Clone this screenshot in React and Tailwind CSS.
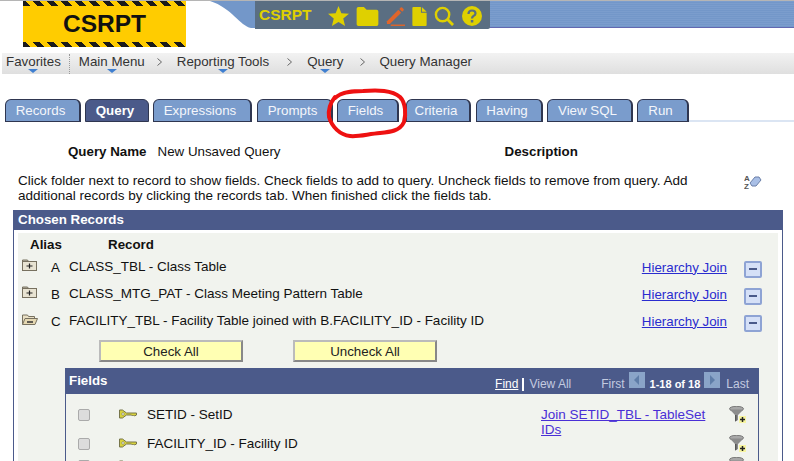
import React from 'react';

const tabs = [
  { label: 'Records', w: 'w-[76px] mr-[4px]' },
  { label: 'Query', w: 'w-[64px] mr-[4px]', active: true },
  { label: 'Expressions', w: 'w-[99px] mr-[5px]' },
  { label: 'Prompts', w: 'w-[76px] mr-[4px]' },
  { label: 'Fields', w: 'w-[62px] mr-[7px]' },
  { label: 'Criteria', w: 'w-[65px] mr-[5px]' },
  { label: 'Having', w: 'w-[67px] mr-[4px]' },
  { label: 'View SQL', w: 'w-[86px] mr-[4px]' },
  { label: 'Run', w: 'w-[52px]' },
];

const records = [
  { alias: 'A', name: 'CLASS_TBL - Class Table', open: false },
  { alias: 'B', name: 'CLASS_MTG_PAT - Class Meeting Pattern Table', open: false },
  { alias: 'C', name: 'FACILITY_TBL - Facility Table joined with B.FACILITY_ID - Facility ID', open: true },
];

const fields = [
  { name: 'SETID - SetID', join: 'Join SETID_TBL - TableSet IDs', h: 'h-[29px]' },
  { name: 'FACILITY_ID - Facility ID', h: 'h-[22px]' },
  { name: 'EFFDT - Effective Date', h: 'h-[30px]' },
];

const Star = () => (
  <svg width="21" height="20" viewBox="0 0 22 21"><path d="M11 0l3 7.500 8 .6-6 5 1.900 7.900L11 16.800 4.100 21 6 13.100l-6-5 8-.6z" fill="#dfd000" /></svg>
);

const Folder = () => (
  <svg width="23" height="19" viewBox="0 0 24 21"><path d="M0 2q0-2 2-2h6l3 3h11q2 0 2 2v14q0 2-2 2H2q-2 0-2-2z" fill="#dfd000" /></svg>
);

const Pencil = () => (
  <svg width="19" height="19" viewBox="0 0 20 20"><path d="M1 15L13 3l3 3L4 18H1z" fill="#e0652a" /><path d="M14 2l1.500-1.500q.8-.5 1.500 0l1.500 1.500q.5.700 0 1.500L17 5z" fill="#e0652a" /><path d="M5 19.200h15" stroke="#e0652a" strokeWidth="1.500" /></svg>
);

const Page = () => (
  <svg width="15" height="19" viewBox="0 0 15 20"><path d="M1 0h8v6h6v13q0 1-1 1H1q-1 0-1-1V1q0-1 1-1z" fill="#dfd000" /><path d="M10 0l5 5h-5z" fill="#dfd000" /></svg>
);

const Search = () => (
  <svg width="20" height="20" viewBox="0 0 21 21" fill="none" stroke="#dfd000"><circle cx="9" cy="9" r="7" strokeWidth="2.500" /><path d="M14 14l6 6" strokeWidth="3" /></svg>
);

const Help = () => (
  <svg width="20" height="20" viewBox="0 0 20 20"><circle cx="10" cy="10" r="10" fill="#dfd000" /><path d="M6.500 8q0-3.500 3.500-3.500T13.500 7.500q0 1.500-2 2.500-1.500.8-1.500 2.500" fill="none" stroke="#5a6e82" strokeWidth="2.200" /><rect x="8.800" y="14" width="2.500" height="2.500" fill="#5a6e82" /></svg>
);

const FolderIcon = ({ open }) => (
  <svg width="16" height="13" viewBox="0 0 16 13" className="shrink-0">
    {open ? (
      <>
        <path d="M.5 11.500V2h5l1 1.500h6V5" fill="#e8dfc4" stroke="#77705f" />
        <path d="M.5 11.500L3 5.500h12.500l-2.500 6z" fill="#e5d8b2" stroke="#77705f" />
        <path d="M5 9h6" stroke="#333" strokeWidth="1.500" />
      </>
    ) : (
      <>
        <path d="M.5 2.500V1h5l1 1.500z" fill="#bdb8a8" stroke="#77705f" />
        <rect x=".5" y="2.500" width="14" height="9" fill="#e8e3d2" stroke="#77705f" />
        <path d="M4.500 7h6M7.500 4.500v5" stroke="#222" strokeWidth="1.200" />
      </>
    )}
  </svg>
);

const MinusButton = () => (
  <span className="flex h-[17px] w-[18px] items-center justify-center rounded-[2px] border-2 border-[#8ea3d4] bg-[#d5e0f7]">
    <span className="h-[2px] w-[8px] bg-[#4a5a8a]" />
  </span>
);

const KeyIcon = () => (
  <svg width="18" height="10" viewBox="0 0 18 10" className="shrink-0">
    <path d="M.5 1h3l4 3h10v2l-2 1-1-1-1 1-1-1H7.500l-4 3h-3z" fill="#d8d23c" stroke="#77754a" />
    <circle cx="4" cy="5" r="1.300" fill="#f2f4ef" stroke="#77754a" strokeWidth=".6" />
  </svg>
);

const FunnelIcon = () => (
  <svg width="17" height="17" viewBox="0 0 17 17" className="shrink-0">
    <ellipse cx="7.500" cy="2.800" rx="7" ry="2.500" fill="#a8a8a8" stroke="#777" />
    <path d="M.8 3.500L6 9v6.500l3-1.500V9l5.500-5.500z" fill="#8c8c8c" />
    <path d="M6 9v6.500l1.500-.8V9z" fill="#555" />
    <rect x="10" y="10" width="7" height="7" fill="#f7f5a0" />
    <path d="M11 13.500h5M13.500 11v5" stroke="#222" strokeWidth="1.500" />
  </svg>
);

const Caret = () => (
  <span className="absolute bottom-[1px] left-1/2 h-0 w-0 -translate-x-1/2 border-x-[5px] border-t-[4px] border-x-transparent border-t-[#3f7fd0]" />
);

const Crumb = ({ children, className, caret }) => (
  <span className={`relative flex h-full items-center pb-[4px] ${className}`}>
    {children}
    {caret && <Caret />}
  </span>
);

const Chevron = ({ className }) => (
  <svg width="5" height="8" viewBox="0 0 5 8" fill="none" stroke="#666" className={`mb-[3px] ${className}`}><path d="M.5.500L4.500 4 .5 7.500" /></svg>
);

export default function App() {
  return (
    <div className="relative h-[461px] w-[794px] overflow-hidden bg-white font-['Liberation_Sans',Arial,sans-serif] text-[13.33px] text-[#111]">
      {/* top banner */}
      <div className="h-[1px] bg-[#b5b5b5]" />
      <div className="flex h-[52px] items-start">
        <div className="ml-[23px] flex h-[46px] w-[163px] shrink-0 flex-col justify-between bg-[#ffcc00]">
          <div className="h-[5px] bg-[repeating-linear-gradient(45deg,#1a1a1a_0,#1a1a1a_5px,#ffcc00_5px,#ffcc00_10px)]" />
          <div className="text-center text-[24.5px] font-bold leading-none text-[#111]">CSRPT</div>
          <div className="h-[5px] bg-[repeating-linear-gradient(45deg,#1a1a1a_0,#1a1a1a_5px,#ffcc00_5px,#ffcc00_10px)]" />
        </div>
        <div className="relative ml-[24px] h-[28px] flex-1">
          <svg width="45" height="27" viewBox="0 0 45 27" className="absolute left-0 top-0">
            <path d="M0 0h45v27H41C30 25 22 7 0 0z" fill="#7397c9" />
          </svg>
          <div className="ml-[45px] h-[27px] bg-[#7397c9] bg-[repeating-linear-gradient(0deg,#7397c9_0,#7397c9_1px,#7b9dcd_1px,#7b9dcd_2px)] [border-bottom:1px_solid_#6268b0]">
            <div className="flex h-[28px] w-[235px] items-center rounded-br-[2px] bg-[#5a6e82] pl-[4px]">
              <span className="text-[15.5px] font-bold text-[#dfd000]">CSRPT</span>
              <span className="ml-[16px] mt-[2px] flex items-center gap-[7px]">
                <Star />
                <Folder />
                <Pencil />
                <Page />
                <Search />
                <span className="ml-[1px]"><Help /></span>
              </span>
            </div>
          </div>
        </div>
      </div>

      {/* breadcrumb bar */}
      <div className="ml-[2px] flex h-[21px] items-center bg-gradient-to-b from-[#f2f2f2] to-[#dfdfdf] pl-[4px] text-[#333]">
        <Crumb caret>Favorites</Crumb>
        <span className="ml-[8px] h-[20px] border-l border-dotted border-[#999]" />
        <Crumb caret className="ml-[9px]">Main Menu</Crumb>
        <Chevron className="ml-[12px]" />
        <Crumb caret className="ml-[15px]">Reporting Tools</Crumb>
        <Chevron className="ml-[18px]" />
        <Crumb caret className="ml-[15px]">Query</Crumb>
        <Chevron className="ml-[17px]" />
        <Crumb className="ml-[14px]">Query Manager</Crumb>
      </div>

      {/* tabs */}
      <div className="mt-[25px] flex h-[23px] items-stretch pl-[5px]">
        {tabs.map((tab) => (
          <div
            key={tab.label}
            className={`flex ${tab.w} items-center justify-center rounded-t-[6px] border border-[#2f3650] pr-[4px] pt-[1px] ${tab.active ? 'bg-[#4b5a8a] font-bold text-white' : 'border-r-2 bg-[#7a9ccc] text-[#f4f6fb]'}`}
          >
            {tab.label}
          </div>
        ))}
        <div className="mt-auto h-[2px] flex-1 bg-[#dbe5f3]" />
      </div>

      {/* query name row */}
      <div className="mt-[21px] flex h-[17px] items-center">
        <span className="ml-[68px] font-bold">Query Name</span>
        <span className="ml-[11px] w-[347px]">New Unsaved Query</span>
        <span className="font-bold">Description</span>
      </div>

      {/* instructions */}
      <div className="mt-[13px] flex">
        <p className="ml-[18px] w-[690px] text-[13.5px] leading-[15px]">
          Click folder next to record to show fields. Check fields to add to query. Uncheck fields to remove from query. Add additional records by clicking the records tab. When finished click the fields tab.
        </p>
        <svg width="18" height="16" viewBox="0 0 18 16" className="ml-[36px] mt-[1px]">
          <text x="0" y="7" fontSize="8" fontWeight="bold" fill="#555">A</text>
          <text x="0" y="15" fontSize="8" fontWeight="bold" fill="#555">Z</text>
          <path d="M6 9l5-6h4l2 3-5 6H8z" fill="#a9bfe6" stroke="#6a7fa8" />
        </svg>
      </div>

      {/* chosen records */}
      <div className="ml-[13px] mr-[11px] mt-[7px] h-[300px] border-x border-[#4b5a8a]">
        <div className="flex h-[20px] items-center bg-[#4b5a8a] pl-[4px] font-bold text-white">Chosen Records</div>
        <div className="mx-[4px] mt-[3px] h-full bg-[#f1f3ee]">
          <div className="flex h-[21px] items-center pt-[2px] font-bold">
            <span className="ml-[12px] w-[78px]">Alias</span>
            <span>Record</span>
          </div>
          {records.map((r) => (
            <div key={r.alias} className="flex h-[27px] items-center">
              <span className="mb-[4px] ml-[4px]"><FolderIcon open={r.open} /></span>
              <span className="ml-[13px] w-[18px]">{r.alias}</span>
              <span className="flex-1 text-[13.5px]">{r.name}</span>
              <a href="#" className="text-[#2a2ccf] underline">Hierarchy Join</a>
              <span className="ml-[17px] mr-[16px] mt-[3px]"><MinusButton /></span>
            </div>
          ))}
          <div className="mt-[5px] flex">
            <button className="ml-[81px] h-[22px] w-[144px] border-2 border-[#bbb] border-b-[#888] border-r-[#888] bg-[#ffffb3] text-[#222]">Check All</button>
            <button className="ml-[50px] h-[22px] w-[144px] border-2 border-[#bbb] border-b-[#888] border-r-[#888] bg-[#ffffb3] text-[#222]">Uncheck All</button>
          </div>

          {/* fields grid */}
          <div className="ml-[47px] mr-[19px] mt-[6px] border-x border-[#4b5a8a]">
            <div className="flex h-[26px] items-center bg-[#4b5a8a] pl-[3px] text-[12px] text-[#c3cbe0]">
              <span className="text-[13.33px] font-bold text-white">Fields</span>
              <span className="ml-auto mt-[6px] text-white underline">Find</span>
              <span className="ml-[4px] mt-[6px] h-[13px] border-l-2 border-white" />
              <span className="ml-[5px] mt-[6px]">View All</span>
              <span className="ml-[30px] mt-[6px]">First</span>
              <span className="mb-[2px] ml-[4px] flex h-[16px] w-[16px] items-center justify-center bg-[#8aa4c8]">
                <span className="h-0 w-0 border-y-[5px] border-r-[5px] border-y-transparent border-r-[#5f7da8]" />
              </span>
              <span className="ml-[5px] mt-[6px] text-[11px] font-bold text-white">1-18 of 18</span>
              <span className="mb-[2px] ml-[4px] flex h-[16px] w-[16px] items-center justify-center bg-[#8aa4c8]">
                <span className="h-0 w-0 border-y-[5px] border-l-[5px] border-y-transparent border-l-[#5f7da8]" />
              </span>
              <span className="ml-[6px] mr-[9px] mt-[6px]">Last</span>
            </div>
            <div className="pt-[12px] text-[13.5px]">
              {fields.map((f) => (
                <div key={f.name} className={`flex ${f.h} items-start`}>
                  <span className="ml-[12px] mt-[3px] h-[12px] w-[12px] rounded-[2px] border border-[#aaa] bg-[#dcdcdc]" />
                  <span className="ml-[29px] mt-[3px]"><KeyIcon /></span>
                  <span className="ml-[10px] mt-[1px] w-[394px] leading-[15px]">{f.name}</span>
                  <a href={f.join ? '#' : undefined} className="mt-[1px] w-[180px] leading-[15px] text-[#4a2fd6] underline">{f.join}</a>
                  <span className="ml-[8px]"><FunnelIcon /></span>
                </div>
              ))}
            </div>
          </div>
        </div>
      </div>

      {/* hand-drawn annotation */}
      <svg width="95" height="60" viewBox="0 0 95 60" className="pointer-events-none absolute left-[320px] top-[85px]">
        <path d="M15 13C22 6 35 6 43 6c15-1 29-1 37 6 6 6 6 18 4 25-4 9-14 10-24 11-12 1-22 4-30 3-10-1-18-9-21-19-1-8 2-15 6-20" fill="none" stroke="#ee1111" strokeWidth="4" strokeLinecap="round" />
      </svg>
    </div>
  );
}
